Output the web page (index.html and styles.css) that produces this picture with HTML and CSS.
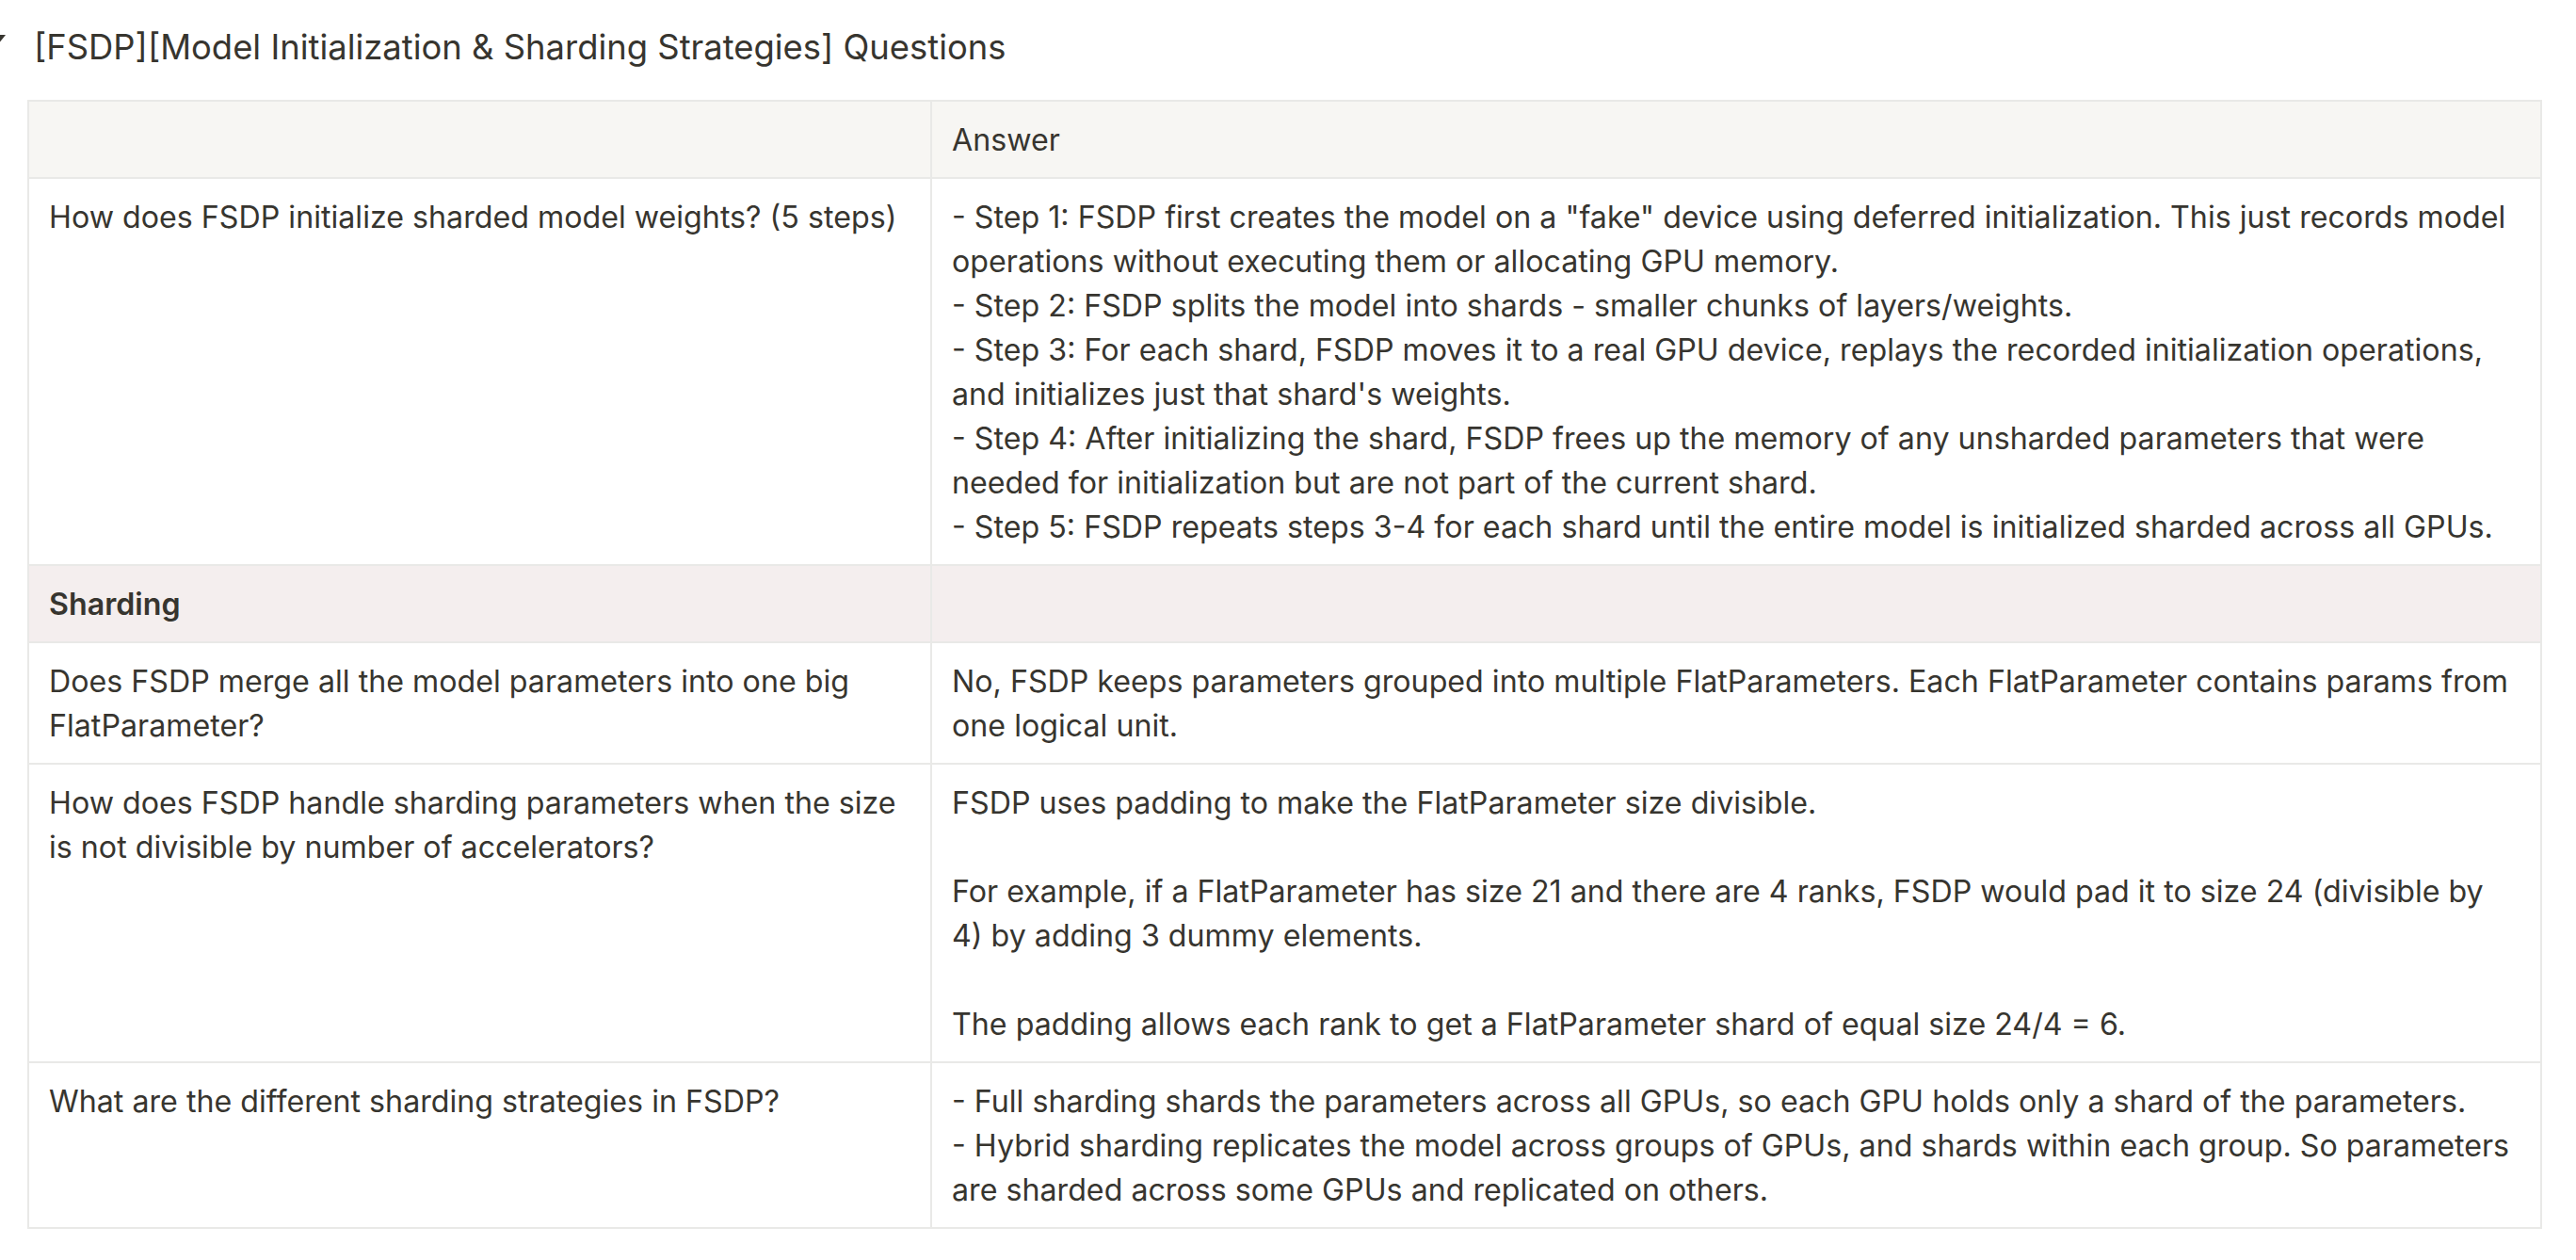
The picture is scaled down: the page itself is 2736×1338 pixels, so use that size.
FILE: index.html
```html
<!DOCTYPE html>
<html lang="en">
<head>
<meta charset="utf-8">
<title>FSDP Questions</title>
<link rel="stylesheet" href="styles.css">
</head>
<body>
<div class="page">
  <div class="toggle">
    <span class="toggle-arrow"></span>
    <h3 class="toggle-title">[FSDP][Model Initialization &amp; Sharding Strategies] Questions</h3>
  </div>
  <table class="qa">
    <colgroup>
      <col class="col-q">
      <col class="col-a">
    </colgroup>
    <tr class="head">
      <td></td>
      <td>Answer</td>
    </tr>
    <tr>
      <td>How does FSDP initialize sharded model weights? (5 steps)</td>
      <td>- Step 1: FSDP first creates the model on a "fake" device using deferred initialization. This just records model operations without executing them or allocating GPU memory.<br>- Step 2: FSDP splits the model into shards - smaller chunks of layers/weights.<br>- Step 3: For each shard, FSDP moves it to a real GPU device, replays the recorded initialization operations, and initializes just that shard's weights.<br>- Step 4: After initializing the shard, FSDP frees up the memory of any unsharded parameters that were needed for initialization but are not part of the current shard.<br>- Step 5: FSDP repeats steps 3-4 for each shard until the entire model is initialized sharded across all GPUs.</td>
    </tr>
    <tr class="section">
      <td>Sharding</td>
      <td></td>
    </tr>
    <tr>
      <td>Does FSDP merge all the model parameters into one big FlatParameter?</td>
      <td>No, FSDP keeps parameters grouped into multiple FlatParameters. Each FlatParameter contains params from one logical unit.</td>
    </tr>
    <tr>
      <td>How does FSDP handle sharding parameters when the size is not divisible by number of accelerators?</td>
      <td>FSDP uses padding to make the FlatParameter size divisible.<br><br>For example, if a FlatParameter has size 21 and there are 4 ranks, FSDP would pad it to size 24 (divisible by 4) by adding 3 dummy elements.<br><br>The padding allows each rank to get a FlatParameter shard of equal size 24/4 = 6.</td>
    </tr>
    <tr>
      <td>What are the different sharding strategies in FSDP?</td>
      <td>- Full sharding shards the parameters across all GPUs, so each GPU holds only a shard of the parameters.<br>- Hybrid sharding replicates the model across groups of GPUs, and shards within each group. So parameters are sharded across some GPUs and replicated on others.</td>
    </tr>
  </table>
</div>
</body>
</html>
```
FILE: styles.css
```css
html, body {
  margin: 0;
  padding: 0;
  background: #ffffff;
}

body {
  font-family: Inter, "Liberation Sans", sans-serif;
  color: #37352f;
  width: 2736px;
  height: 1338px;
  overflow: hidden;
}

.page {
  padding-top: 26px;
}

.toggle {
  display: flex;
  align-items: center;
  height: 48px;
  margin-bottom: 32px;
}

.toggle-arrow {
  flex: none;
  width: 0;
  height: 0;
  margin-left: -10px;
  margin-right: 30px;
  margin-top: -16px;
  border-left: 8px solid transparent;
  border-right: 8px solid transparent;
  border-top: 10px solid #37352f;
}

.toggle-title {
  margin: 0;
  font-size: 36.4px;
  line-height: 48px;
  font-weight: 400;
  color: #37352f;
}

.qa {
  margin-left: 29px;
  width: 2671px;
  border-collapse: collapse;
  table-layout: fixed;
  font-size: 32.2px;
  line-height: 47px;
}

.col-q {
  width: 959px;
}

.qa td {
  border: 2px solid #e9e9e7;
  padding: 17px 22px 16px 21px;
  vertical-align: top;
  color: #37352f;
}

.head td {
  background: #f7f6f3;
}

.section td {
  background: #f4eeee;
  font-weight: 600;
}
```
